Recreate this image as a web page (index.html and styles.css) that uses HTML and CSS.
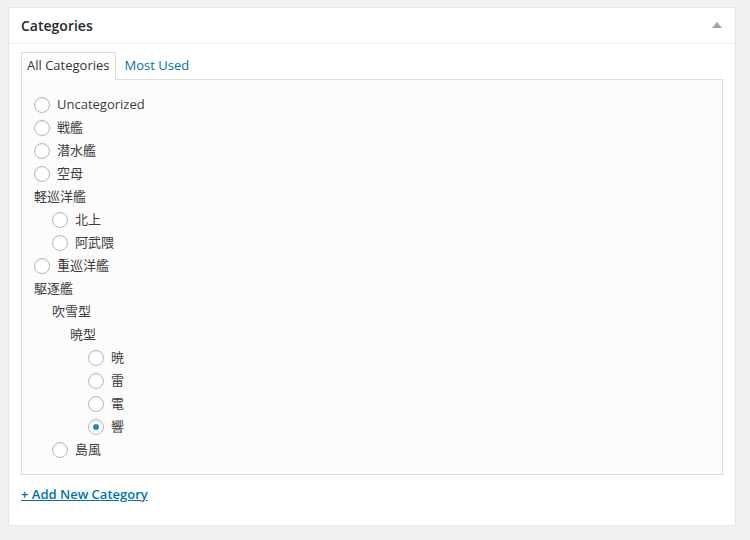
FILE: index.html
```html
<!DOCTYPE html>
<html>
<head>
<meta charset="utf-8">
<link rel="stylesheet" href="styles.css">
</head>
<body>
<div class="postbox">
  <div class="hndle">
    <h2>Categories</h2>
    <span class="toggle"></span>
  </div>
  <div class="inside">
    <ul class="tabs">
      <li class="tab active">All Categories</li>
      <li class="tab"><a href="#">Most Used</a></li>
    </ul>
    <div class="panel">
      <ul class="checklist">
        <li class="row"><span class="radio"></span>Uncategorized</li>
        <li class="row"><span class="radio"></span>戦艦</li>
        <li class="row"><span class="radio"></span>潜水艦</li>
        <li class="row"><span class="radio"></span>空母</li>
        <li class="row">軽巡洋艦</li>
        <li class="row l1"><span class="radio"></span>北上</li>
        <li class="row l1"><span class="radio"></span>阿武隈</li>
        <li class="row"><span class="radio"></span>重巡洋艦</li>
        <li class="row">駆逐艦</li>
        <li class="row l1">吹雪型</li>
        <li class="row l2">暁型</li>
        <li class="row l3"><span class="radio"></span>暁</li>
        <li class="row l3"><span class="radio"></span>雷</li>
        <li class="row l3"><span class="radio"></span>電</li>
        <li class="row l3"><span class="radio checked"></span>響</li>
        <li class="row l1"><span class="radio"></span>島風</li>
      </ul>
    </div>
    <a class="add" href="#">+ Add New Category</a>
  </div>
</div>
</body>
</html>
```

FILE: styles.css
```css
html, body {
  margin: 0;
  padding: 0;
  background: #f1f1f1;
}
body {
  padding: 7px 14px 0 8px;
  font-family: "Open Sans", "Noto Sans CJK JP", sans-serif;
  font-size: 13px;
  color: #3c3c3c;
}
.postbox {
  width: 726px;
  height: 517px;
  background: #fff;
  border: 1px solid #e5e5e5;
  box-shadow: 0 1px 1px rgba(0,0,0,.04);
}
.hndle {
  display: flex;
  align-items: center;
  justify-content: space-between;
  height: 35px;
  border-bottom: 1px solid #eee;
  padding: 0 13px 0 12px;
}
.hndle h2 {
  margin: 0;
  font-size: 14px;
  font-weight: 600;
  color: #23282d;
  line-height: 20px;
  padding-top: 1px;
}
.toggle {
  width: 0;
  height: 0;
  border-left: 5px solid transparent;
  border-right: 5px solid transparent;
  border-bottom: 6px solid #a0a5aa;
  margin-top: -1px;
}
.inside {
  padding: 8px 12px 0 12px;
}
.tabs {
  list-style: none;
  margin: 0;
  padding: 0;
  display: flex;
  height: 27px;
}
.tab {
  padding: 3px 5px 5px 5px;
  line-height: 19px;
  border: 1px solid transparent;
  border-bottom: none;
}
.tab a {
  color: #0073aa;
  text-decoration: none;
}
.tab.active {
  padding: 3px 6px 5px 5px;
  border-color: #ddd;
  background: #fdfdfd;
  color: #32373c;
  position: relative;
  z-index: 1;
  height: 20px;
}
.tab.active + .tab {
  padding-left: 7px;
}
.panel {
  border: 1px solid #ddd;
  background: #fcfcfc;
  height: 394px;
  padding: 0 12px;
}
.checklist {
  list-style: none;
  margin: 13px 0 0 0;
  padding: 0;
}
.row {
  display: flex;
  align-items: center;
  height: 23px;
  line-height: 23px;
}
.l1 { padding-left: 18px; }
.l2 { padding-left: 36px; }
.l3 { padding-left: 54px; }
.radio {
  box-sizing: border-box;
  width: 16px;
  height: 16px;
  border: 1px solid #b4b9be;
  border-radius: 50%;
  background: #fff;
  box-shadow: inset 0 1px 2px rgba(0,0,0,.07);
  margin-right: 7px;
  display: flex;
  align-items: center;
  justify-content: center;
}
.radio.checked::before {
  content: "";
  width: 6px;
  height: 6px;
  border-radius: 50%;
  background: #1e8cbe;
}
.add {
  display: inline-block;
  margin-top: 10px;
  color: #0073aa;
  font-weight: 600;
  text-decoration: underline;
  line-height: 19px;
}
```
